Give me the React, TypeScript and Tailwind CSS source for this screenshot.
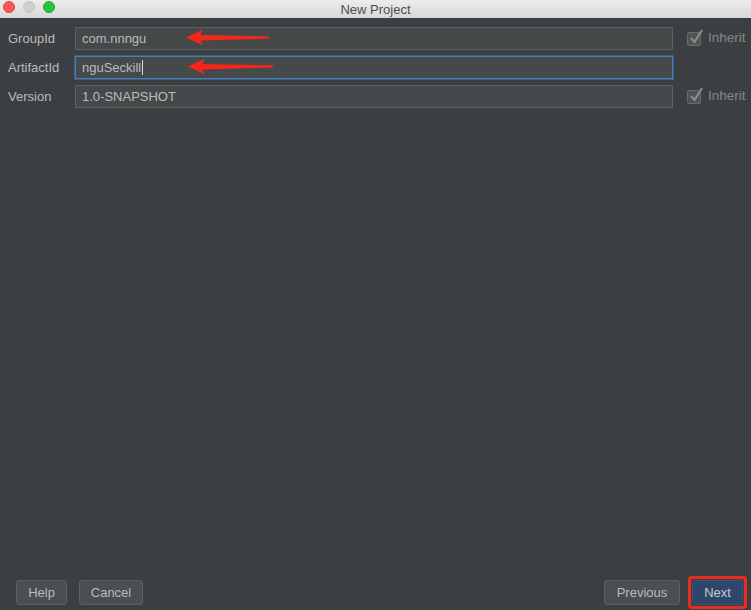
import React from "react";

const Arrow = ({ left, top, width }: { left: number; top: number; width: number }) => (
  <svg
    className="absolute"
    style={{ left, top }}
    width={width}
    height={17}
    viewBox={`0 0 ${width} 17`}
  >
    <polygon
      points={`0,8.5 17,0.5 14.5,6 ${width},7.2 ${width},9.6 14.5,11.5 17,16.5`}
      fill="#f5261b"
    />
  </svg>
);

const Check = () => (
  <div className="relative w-[14px] h-[14px] border border-[#6b6b6b] bg-[#505354] rounded-[2px]">
    <svg className="absolute -top-[4px] left-[1px]" width="15" height="16" viewBox="0 0 15 16">
      <path d="M2 9 L5.5 13 L13 1" stroke="#8c8c8c" strokeWidth="2.2" fill="none" />
    </svg>
  </div>
);

const Field = ({ value, focused, cursor }: { value: string; focused?: boolean; cursor?: boolean }) => (
  <div
    className={
      "h-[23px] flex items-center px-[6px] bg-[#45494a] text-[13px] text-[#bbbbbb] " +
      (focused ? "border border-[#4a7db5] shadow-[0_0_0_1px_#3d5f85]" : "border border-[#5e6162]")
    }
  >
    <span>{value}</span>
    {cursor && <span className="w-px h-[15px] bg-[#d8d8d8] ml-[1px]" />}
  </div>
);

const Btn = ({ label, w, primary }: { label: string; w: number; primary?: boolean }) => (
  <div
    style={{ width: w }}
    className={
      "h-[25px] flex items-center justify-center rounded-[3px] text-[13px] " +
      (primary
        ? "bg-[#2e4669] border border-[#37537a] text-[#c3c9d1]"
        : "bg-[#4b4f51] border border-[#5c6062] text-[#bbbbbb]")
    }
  >
    {label}
  </div>
);

export default function App() {
  return (
    <div
      className="relative w-[751px] h-[610px] bg-[#3c3f41] flex flex-col overflow-hidden"
      style={{ fontFamily: '"Liberation Sans", Arial, sans-serif' }}
    >
      <div className="relative h-[18px] bg-gradient-to-b from-[#ececec] to-[#d8d8d8] flex items-center justify-center shrink-0">
        <div className="absolute left-[3px] top-[1px] flex gap-[8px]">
          <div className="w-[12px] h-[12px] rounded-full bg-[#fc5753] border border-[#e0443e]" />
          <div className="w-[12px] h-[12px] rounded-full bg-[#d0d0d0] border border-[#c4c4c4]" />
          <div className="w-[12px] h-[12px] rounded-full bg-[#2ac340] border border-[#1eaa32]" />
        </div>
        <span className="text-[13px] text-[#4d4d4d] leading-none">New Project</span>
      </div>

      <div className="pt-[9px] grid grid-cols-[75px_598px_auto] gap-y-[6px] items-center text-[13px] text-[#bbbbbb]">
        <span className="pl-[8px]">GroupId</span>
        <Field value="com.nnngu" />
        <div className="flex items-center pl-[14px] gap-[7px]">
          <Check />
          <span className="text-[#85878a] text-[13.5px]">Inherit</span>
        </div>

        <span className="pl-[8px]">ArtifactId</span>
        <Field value="nguSeckill" focused cursor />
        <div />

        <span className="pl-[8px]">Version</span>
        <Field value="1.0-SNAPSHOT" />
        <div className="flex items-center pl-[14px] gap-[7px]">
          <Check />
          <span className="text-[#85878a] text-[13.5px]">Inherit</span>
        </div>
      </div>

      <div className="flex-1" />

      <div className="flex items-center pl-[16px] pr-[8px] pb-[5px] h-[30px]">
        <Btn label="Help" w={51} />
        <div className="w-[12px]" />
        <Btn label="Cancel" w={64} />
        <div className="flex-1" />
        <Btn label="Previous" w={76} />
        <div className="w-[12px]" />
        <div className="relative">
          <div className="absolute -inset-[4px] border-[3px] border-[#ea2b1f] rounded-[4px]" />
          <Btn label="Next" w={51} primary />
        </div>
      </div>

      <Arrow left={186} top={29} width={83} />
      <Arrow left={188} top={58} width={85} />
    </div>
  );
}
